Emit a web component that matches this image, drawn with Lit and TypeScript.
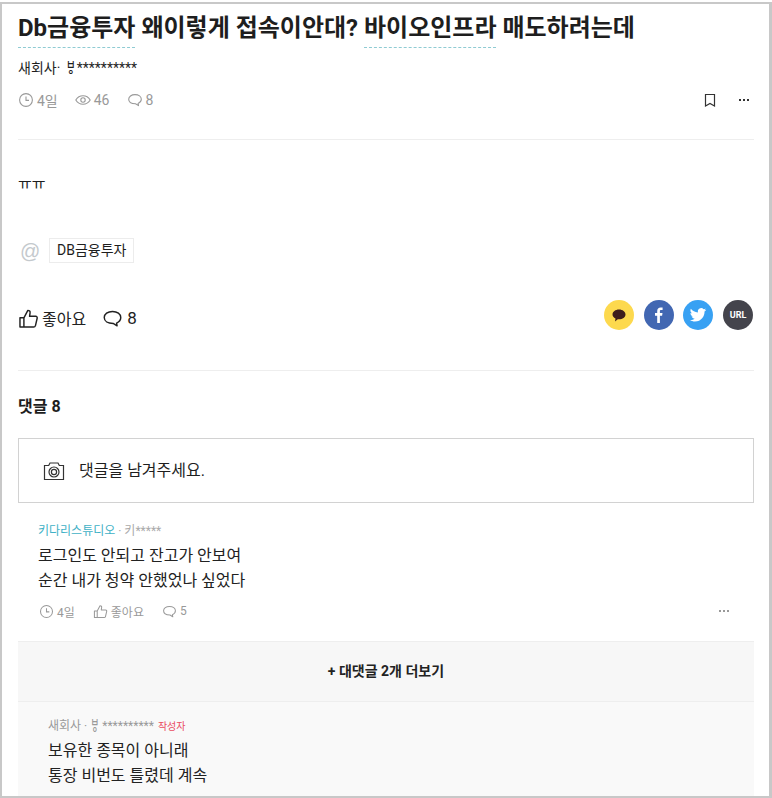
import { LitElement, html, css, svg } from 'lit';
import { customElement } from 'lit/decorators.js';

const clock = svg`<circle cx="8" cy="8" r="6.4" fill="none" stroke="currentColor" stroke-width="1.1"/><path d="M8 4.4V8.4H11" fill="none" stroke="currentColor" stroke-width="1.1"/>`;
const bubble = svg`<path d="M8 2.6c3.6 0 6.3 2 6.3 4.7 0 1.9-1.3 3.4-3.2 4.2l.4 2.1-3-1.8C4.500 11.800 1.700 10 1.700 7.300 1.700 4.600 4.400 2.600 8 2.600z" fill="none" stroke="currentColor" stroke-width="1.1" stroke-linejoin="round"/>`;
const thumb = svg`<path d="M1.500 7.500h3v7h-3zM4.500 7.500 7.500 1.800c1.200 0 1.900.8 1.700 2L8.800 6.300h4.700c.8 0 1.300.7 1.100 1.500l-1.300 5.600c-.2.700-.7 1.100-1.400 1.100H4.500" fill="none" stroke="currentColor" stroke-width="1.100" stroke-linejoin="round"/>`;
const eye = svg`<path d="M.8 8C2.500 5.200 5 3.800 8 3.800s5.500 1.400 7.200 4.200c-1.700 2.800-4.200 4.200-7.200 4.200S2.500 10.800.8 8z" fill="none" stroke="currentColor" stroke-width="1.100"/><circle cx="8" cy="8" r="2.200" fill="none" stroke="currentColor" stroke-width="1.100"/>`;

function icon(body: unknown, size: number) {
  return html`<svg class="ico" width=${size} height=${size} viewBox="0 0 16 16">${body}</svg>`;
}

@customElement('app-root')
export class AppRoot extends LitElement {
  static styles = css`
    :host {
      display: block;
      box-sizing: border-box;
      width: 772px;
      height: 798px;
      padding-top: 2px;
      background: #fff;
      color: #1e1e1e;
      font-family: Roboto, "Noto Sans CJK KR", sans-serif;
    }
    .page {
      box-sizing: border-box;
      height: 796px;
      overflow: hidden;
      padding: 0 15px 0 16px;
      border: 2px solid #c8c8c8;
      border-right-width: 3px;
    }
    h1 {
      margin: 0;
      padding-top: 6px;
      font-size: 24px;
      line-height: 37px;
      font-weight: 700;
      white-space: nowrap;
    }
    h1 span {
      display: inline-block;
      border-bottom: 1px dashed #8fcbd3;
    }
    .author {
      margin-top: 10px;
      font-size: 14px;
      line-height: 20px;
      height: 20px;
    }
    .ring {
      display: inline-block;
      transform: scaleY(1.4);
    }
    .author .ring {
      font-size: 13px;
      margin: 0 0 0 1px;
    }
    .meta-row {
      display: flex;
      justify-content: space-between;
      align-items: center;
      margin-top: 12px;
      height: 20px;
      padding-bottom: 29px;
      border-bottom: 1px solid #eeeeee;
    }
    .stats {
      display: flex;
      gap: 17px;
      font-size: 14px;
      color: #999;
    }
    .stat {
      display: flex;
      align-items: center;
      gap: 3px;
    }
    .actions {
      display: flex;
      align-items: center;
      gap: 22px;
      padding-right: 5px;
      color: #333;
    }
    .dots {
      display: flex;
      gap: 2px;
    }
    .dots i {
      width: 2px;
      height: 2px;
      background: currentColor;
    }
    .body {
      margin-top: 33px;
      font-size: 15px;
      line-height: 22px;
    }
    .tag-row {
      display: flex;
      align-items: center;
      gap: 9px;
      margin-top: 43px;
      padding-left: 2px;
    }
    .at {
      font-family: "Liberation Sans", sans-serif;
      font-size: 20px;
      line-height: 24px;
      color: #c4c9cd;
      width: 20px;
    }
    .tag {
      border: 1px solid #ececec;
      padding: 0 7px;
      font-size: 14px;
      line-height: 23px;
    }
    .share-row {
      display: flex;
      justify-content: space-between;
      align-items: center;
      margin-top: 37px;
      padding-bottom: 38px;
      border-bottom: 1px solid #eeeeee;
      height: 32px;
    }
    .reacts {
      display: flex;
      align-items: center;
      gap: 16px;
      padding-top: 4px;
      font-size: 16px;
      color: #222;
    }
    .react {
      display: flex;
      align-items: center;
      gap: 3px;
    }
    .react.count {
      gap: 4px;
      font-size: 17px;
    }
    .sns {
      display: flex;
      gap: 9.600px;
      padding: 0 1px 2px 0;
    }
    .sns > div {
      display: flex;
      align-items: center;
      justify-content: center;
      width: 30px;
      height: 30px;
      border-radius: 50%;
    }
    .kakao { background: #fdd94e; }
    .fb { background: #4267b2; }
    .tw { background: #38a1f3; }
    .url {
      background: #44444c;
      color: #fff;
      font-size: 9px;
      font-weight: 700;
    }
    h2 {
      margin: 25px 0 0;
      font-size: 16px;
      line-height: 22px;
      font-weight: 700;
    }
    .input {
      display: flex;
      align-items: center;
      gap: 14px;
      box-sizing: border-box;
      height: 65px;
      margin-top: 20px;
      padding-left: 24px;
      border: 1px solid #d2d2d2;
      font-size: 16px;
    }
    .input span {
      margin-bottom: 4px;
    }
    .comment {
      padding: 19px 0 0 20px;
    }
    .who {
      font-size: 12px;
      line-height: 18px;
      color: #aaa;
    }
    .who b {
      font-weight: 400;
      color: #3fb1c6;
    }
    .text {
      margin-top: 3px;
      font-size: 16px;
      line-height: 25px;
      color: #222;
    }
    .foot {
      display: flex;
      justify-content: space-between;
      align-items: center;
      height: 20px;
      margin-top: 8px;
      padding: 0 25px 0 1px;
      font-size: 12px;
      color: #999;
    }
    .foot-left {
      display: flex;
      gap: 18px;
    }
    .more {
      box-sizing: border-box;
      margin-top: 20px;
      height: 61px;
      display: flex;
      align-items: center;
      justify-content: center;
      padding-bottom: 4px;
      background: #f7f7f7;
      border-top: 1px solid #eeeeee;
      border-bottom: 1px solid #eeeeee;
      font-size: 14px;
      font-weight: 700;
      color: #222;
    }
    .reply {
      background: #f9f9f9;
      padding: 15px 0 0 30px;
      height: 120px;
    }
    .reply .who {
      color: #999;
    }
    .reply .who .ring {
      font-size: 12px;
      margin: 0 -1px;
    }
    .reply .text {
      margin-top: 2px;
    }
    .reply .who em {
      font-style: normal;
      font-size: 10px;
      color: #ea4c5f;
      margin-left: 1px;
    }
  `;

  render() {
    return html`
      <div class="page">
        <h1><span>Db금융투자</span> 왜이렇게 접속이안대? <span>바이오인프라</span> 매도하려는데</h1>
        <div class="author">새회사· <span class="ring">ㅸ</span>**********</div>
        <div class="meta-row">
          <div class="stats">
            <div class="stat">${icon(clock, 16)}4일</div>
            <div class="stat">${icon(eye, 16)}46</div>
            <div class="stat">${icon(bubble, 16)}8</div>
          </div>
          <div class="actions">
            <svg width="14" height="14" viewBox="0 0 14 14"><path d="M2.500 1.500h9v11.500L7 10.500 2.500 13z" fill="none" stroke="currentColor" stroke-width="1.200"/></svg>
            <div class="dots"><i></i><i></i><i></i></div>
          </div>
        </div>
        <div class="body">ㅠㅠ</div>
        <div class="tag-row">
          <span class="at">@</span>
          <span class="tag">DB금융투자</span>
        </div>
        <div class="share-row">
          <div class="reacts">
            <div class="react">${icon(thumb, 21)}좋아요</div>
            <div class="react count">${icon(bubble, 21)}8</div>
          </div>
          <div class="sns">
            <div class="kakao"><svg width="16" height="15" viewBox="0 0 16 15"><path d="M8 1.500c3.600 0 6.500 2.200 6.500 4.900S11.600 11.300 8 11.300c-.4 0-.8 0-1.200-.1L4 13.500l.5-3C2.700 9.600 1.500 8.100 1.500 6.400 1.500 3.700 4.400 1.500 8 1.500z" fill="#3e1d1c"/></svg></div>
            <div class="fb"><svg width="16" height="18" viewBox="0 0 16 18"><path d="M6.200 17V9.800H4V7h2.200V5c0-2.300 1.400-3.500 3.400-3.500.9 0 1.800.1 2 .1v2.400h-1.400c-1.100 0-1.300.5-1.300 1.300V7h2.600l-.4 2.800H8.900V17z" fill="#fff"/></svg></div>
            <div class="tw"><svg width="18" height="18" viewBox="0 0 24 24"><path d="M23 5.100c-.8.400-1.700.6-2.600.7.900-.6 1.600-1.400 2-2.500-.9.500-1.800.9-2.900 1.100a4.500 4.500 0 0 0-7.700 4.100C8 8.300 4.700 6.500 2.500 3.800c-1.200 2.100-.6 4.700 1.400 6-.7 0-1.400-.2-2-.6 0 2.200 1.500 4.100 3.600 4.500-.7.200-1.400.2-2 .1.600 1.800 2.300 3.100 4.200 3.100A9.100 9.100 0 0 1 1 18.800c2 1.300 4.400 2 6.900 2 8.400 0 13.100-7.100 12.800-13.400.9-.6 1.700-1.400 2.300-2.300z" fill="#fff"/></svg></div>
            <div class="url">URL</div>
          </div>
        </div>
        <h2>댓글 8</h2>
        <div class="input">
          <svg width="22" height="22" viewBox="0 0 22 22"><path d="M1.500 5.500h4.200l1.300-2.500h8l1.300 2.500h4.200v14h-19z" fill="none" stroke="#333" stroke-width="1.200"/><circle cx="11" cy="12" r="5" fill="none" stroke="#333" stroke-width="1.200"/><circle cx="11" cy="12" r="2.600" fill="none" stroke="#333" stroke-width="1.200"/></svg>
          <span>댓글을 남겨주세요.</span>
        </div>
        <div class="comment">
          <div class="who"><b>키다리스튜디오</b> · 키*****</div>
          <div class="text">로그인도 안되고 잔고가 안보여<br />순간 내가 청약 안했었나 싶었다</div>
          <div class="foot">
            <div class="foot-left">
              <div class="stat">${icon(clock, 15)}4일</div>
              <div class="stat">${icon(thumb, 15)}좋아요</div>
              <div class="stat">${icon(bubble, 15)}5</div>
            </div>
            <div class="dots"><i></i><i></i><i></i></div>
          </div>
        </div>
        <div class="more">+ 대댓글 2개 더보기</div>
        <div class="reply">
          <div class="who">새회사 · <span class="ring">ㅸ</span> ********** <em>작성자</em></div>
          <div class="text">보유한 종목이 아니래<br />통장 비번도 틀렸데 계속</div>
        </div>
      </div>
    `;
  }
}
